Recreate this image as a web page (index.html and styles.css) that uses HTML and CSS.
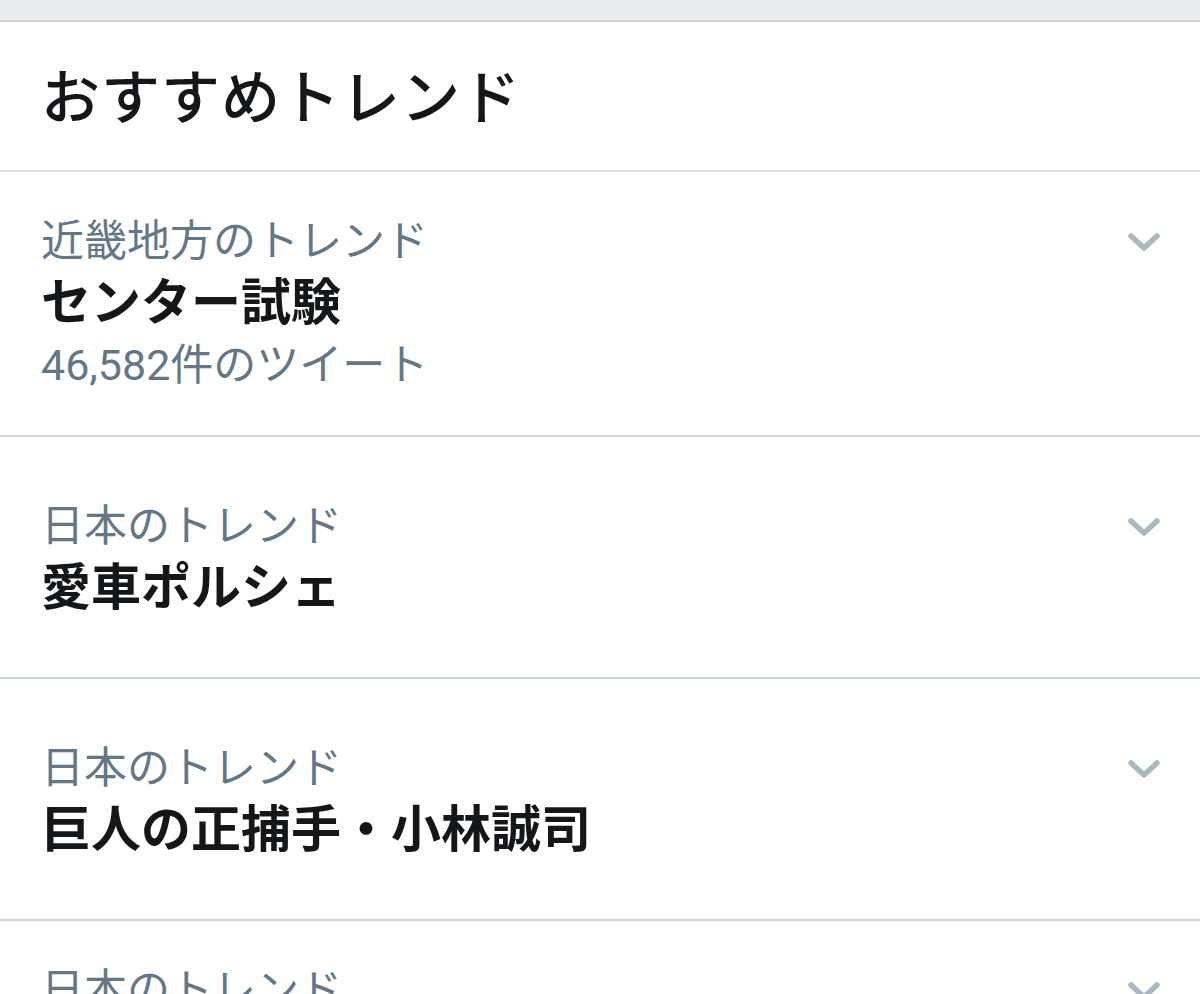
FILE: index.html
```html
<!DOCTYPE html>
<html lang="ja">
<head>
<meta charset="utf-8">
<link rel="stylesheet" href="styles.css">
</head>
<body>
<div class="topbar"></div>
<div class="header">おすすめトレンド</div>
<ul class="trends">
  <li class="trend">
    <div class="row">
      <span class="label">近畿地方のトレンド</span>
      <svg class="chev" viewBox="0 0 40 24"><path d="M7 7 L20 19 L33 7"/></svg>
    </div>
    <div class="title">センター試験</div>
    <div class="count">46,582件のツイート</div>
  </li>
  <li class="trend">
    <div class="row">
      <span class="label">日本のトレンド</span>
      <svg class="chev" viewBox="0 0 40 24"><path d="M7 7 L20 19 L33 7"/></svg>
    </div>
    <div class="title">愛車ポルシェ</div>
  </li>
  <li class="trend">
    <div class="row">
      <span class="label">日本のトレンド</span>
      <svg class="chev" viewBox="0 0 40 24"><path d="M7 7 L20 19 L33 7"/></svg>
    </div>
    <div class="title">巨人の正捕手・小林誠司</div>
  </li>
  <li class="trend trend-cut">
    <div class="row">
      <span class="label">日本のトレンド</span>
      <svg class="chev" viewBox="0 0 40 24"><path d="M7 7 L20 19 L33 7"/></svg>
    </div>
  </li>
</ul>
</body>
</html>
```

FILE: styles.css
```css
html, body {
  margin: 0;
  padding: 0;
  background: #ffffff;
}
body {
  font-family: Roboto, "Noto Sans CJK JP", sans-serif;
  color: #14171a;
  overflow: hidden;
  height: 994px;
}
.topbar {
  height: 20px;
  background: #e6ecf0;
  border-bottom: 2px solid #ccd6dd;
}
.header {
  height: 150px;
  box-sizing: border-box;
  padding: 0 41px 6px;
  display: flex;
  align-items: center;
  font-size: 59px;
  font-weight: 500;
  letter-spacing: 1px;
  border-bottom: 2px solid #dcdfe2;
}
.trends {
  list-style: none;
  margin: 0;
  padding: 0;
}
.trend {
  box-sizing: border-box;
  min-height: 242px;
  padding: 38px 40px 39px 41px;
  display: flex;
  flex-direction: column;
  justify-content: center;
  border-bottom: 2px solid #ccd6dd;
}
.trend-cut {
  justify-content: flex-start;
}
.row {
  display: flex;
  align-items: center;
  justify-content: space-between;
  height: 62px;
}
.label {
  font-size: 43px;
  color: #657786;
  line-height: 62px;
}
.chev {
  width: 40px;
  height: 24px;
  margin-right: -4px;
}
.chev path {
  fill: none;
  stroke: #aab8c2;
  stroke-width: 5.5;
  stroke-linecap: round;
  stroke-linejoin: round;
}
.title {
  font-size: 50px;
  font-weight: 700;
  line-height: 62px;
}
.count {
  font-size: 43px;
  color: #657786;
  line-height: 62px;
}
```
